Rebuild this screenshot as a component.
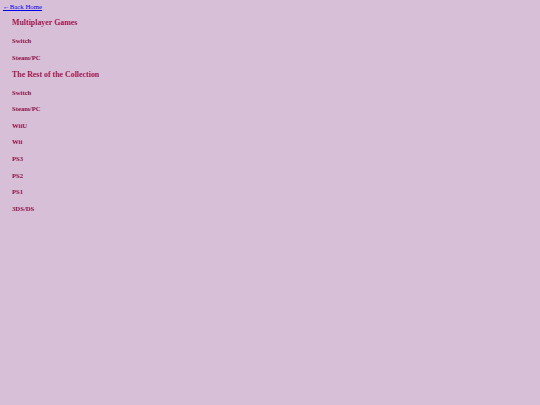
import React from "react";

const multi = ["Switch", "Steam/PC"];
const rest = ["Switch", "Steam/PC", "WiiU", "Wii", "PS3", "PS2", "PS1", "3DS/DS"];

export default function App() {
  return (
    <div className="w-[540px] h-[405px] bg-[#d8bfd8] overflow-hidden" style={{ fontFamily: '"Liberation Serif", "Times New Roman", serif' }}>
      <div className="pl-[3px] pt-[2px]">
        <a href="#" className="block h-[10px] leading-[9.5px] text-[6.8px] text-[#0000ee] underline">←Back Home</a>
      </div>
      <div className="pl-[12px]">
        <h3 className="mt-[6px] h-[10px] leading-[10.5px] text-[7.9px] font-bold text-[#a3154f]">Multiplayer Games</h3>
        {multi.map((m, i) => (
          <h4 key={"m" + i} className={(i === 0 ? "mt-[8px]" : "mt-[6.6px]") + " h-[10px] leading-[10px] text-[6.7px] font-bold text-[#8e1048]"}>{m}</h4>
        ))}
        <h3 className="mt-[7.4px] h-[10px] leading-[10.5px] text-[7.9px] font-bold text-[#a3154f]">The Rest of the Collection</h3>
        {rest.map((m, i) => (
          <h4 key={"r" + i} className={(i === 0 ? "mt-[7.6px]" : "mt-[6.6px]") + " h-[10px] leading-[10px] text-[6.7px] font-bold text-[#8e1048]"}>{m}</h4>
        ))}
      </div>
    </div>
  );
}
